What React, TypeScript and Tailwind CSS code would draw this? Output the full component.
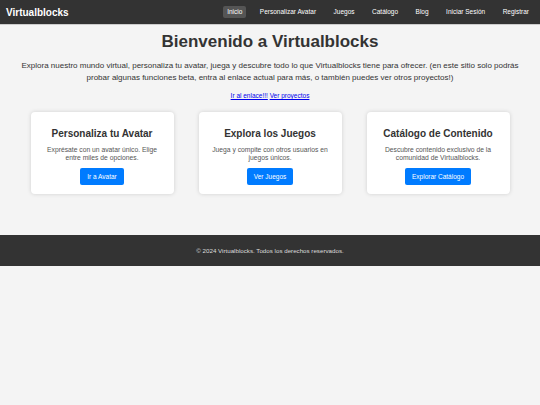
import React from "react";

const font = { fontFamily: '"Liberation Sans", Arial, sans-serif' };

export default function App() {
  const nav = ["Inicio", "Personalizar Avatar", "Juegos", "Catálogo", "Blog", "Iniciar Sesión", "Registrar"];
  const cards = [
    { t: "Personaliza tu Avatar", d: "Exprésate con un avatar único. Elige entre miles de opciones.", b: "Ir a Avatar" },
    { t: "Explora los Juegos", d: "Juega y compite con otros usuarios en juegos únicos.", b: "Ver Juegos" },
    { t: "Catálogo de Contenido", d: "Descubre contenido exclusivo de la comunidad de Virtualblocks.", b: "Explorar Catálogo" },
  ];
  return (
    <div className="min-h-[405px] bg-[#f4f4f4] text-[#333]" style={font}>
      <header className="flex h-[25px] items-center justify-between border-b border-[#ccc] bg-[#333] pl-[6px] pr-[7px]">
        <div className="text-[10px] font-bold text-white">Virtualblocks</div>
        <nav className="flex items-center gap-[9.5px]">
          {nav.map((n, i) => (
            <span
              key={n}
              className={`rounded-[2px] px-[4px] py-[3px] text-[6.5px] leading-[6px] text-white ${i === 0 ? "bg-[#555]" : ""}`}
            >
              {n}
            </span>
          ))}
        </nav>
      </header>
      <main className="flex flex-col items-center px-[18px] pt-[7px]">
        <h1 className="text-[17px] font-bold leading-[20px] text-[#333]">Bienvenido a Virtualblocks</h1>
        <p className="mt-[8px] text-center text-[8px] leading-[11.5px] text-[#333]">
          Explora nuestro mundo virtual, personaliza tu avatar, juega y descubre todo lo que Virtualblocks tiene para ofrecer. (en este sitio solo podrás probar algunas funciones beta, entra al enlace actual para más, o también puedes ver otros proyectos!)
        </p>
        <div className="mt-[9px] text-[6.5px] leading-[8px]">
          <a href="#" className="text-[#0000ee] underline">Ir al enlace!!!</a>{" "}
          <a href="#" className="text-[#0000ee] underline">Ver proyectos</a>
        </div>
        <div className="mt-[12px] flex gap-[25px]">
          {cards.map((c) => (
            <div
              key={c.t}
              className="flex h-[82px] w-[143px] flex-col items-center rounded-[4px] bg-white px-[10px] pt-[15px] shadow-[0_0_4px_rgba(0,0,0,0.15)]"
            >
              <div className="text-[10px] font-bold leading-[13px] text-[#333]">{c.t}</div>
              <div className="mt-[6px] text-center text-[6.75px] leading-[8px] text-[#555]">{c.d}</div>
              <button className="mt-[6px] rounded-[2px] bg-[#007bff] px-[7px] py-[5px] text-[6.5px] leading-[7px] text-white">
                {c.b}
              </button>
            </div>
          ))}
        </div>
      </main>
      <footer className="mt-[41px] flex h-[31px] items-center justify-center bg-[#333] text-[6.2px] text-[#ddd]">
        © 2024 Virtualblocks. Todos los derechos reservados.
      </footer>
    </div>
  );
}
